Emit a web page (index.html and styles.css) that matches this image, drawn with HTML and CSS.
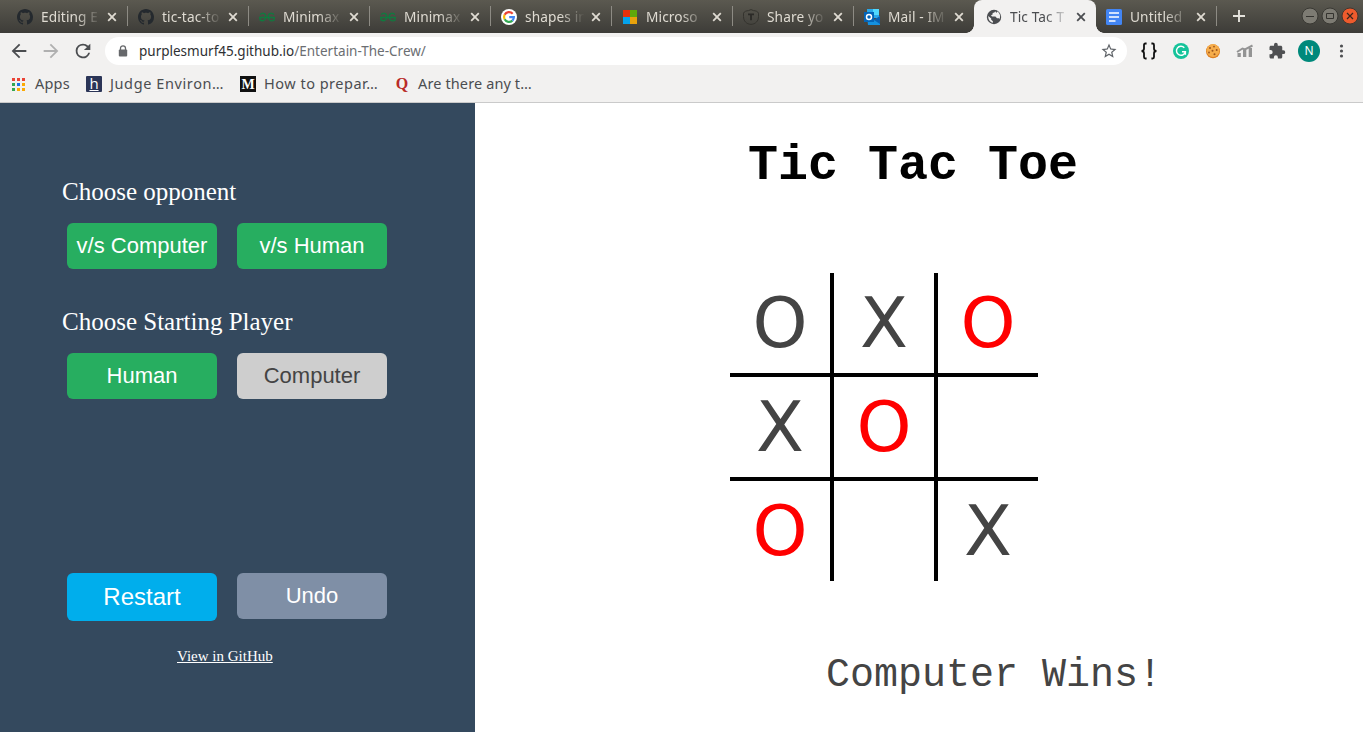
FILE: index.html
```html
<!DOCTYPE html>
<html lang="en">
<head>
<meta charset="utf-8">
<title>Tic Tac Toe</title>
<link rel="stylesheet" href="styles.css">
</head>
<body>
<svg class="defs" width="0" height="0">
  <symbol id="octocat" viewBox="0 0 16 16"><path d="M8 0C3.58 0 0 3.58 0 8c0 3.54 2.29 6.53 5.47 7.59.4.07.55-.17.55-.38 0-.19-.01-.82-.01-1.49-2.01.37-2.53-.49-2.69-.94-.09-.23-.48-.94-.82-1.13-.28-.15-.68-.52-.01-.53.63-.01 1.08.58 1.23.82.72 1.21 1.87.87 2.33.66.07-.52.28-.87.51-1.07-1.78-.2-3.64-.89-3.64-3.95 0-.87.31-1.59.82-2.15-.08-.2-.36-1.02.08-2.12 0 0 .67-.21 2.2.82.64-.18 1.32-.27 2-.27s1.36.09 2 .27c1.53-1.04 2.2-.82 2.2-.82.44 1.1.16 1.92.08 2.12.51.56.82 1.27.82 2.15 0 3.07-1.87 3.75-3.65 3.95.29.25.54.73.54 1.48 0 1.07-.01 1.93-.01 2.2 0 .21.15.46.55.38A8.01 8.01 0 0 0 16 8c0-4.42-3.58-8-8-8z" fill="#24292e"/></symbol>
  <symbol id="geeks" viewBox="0 0 16 16"><path d="M0 8.500h16M1.200 5.600C2.800 3.600 6.800 3.900 6.800 7.800S3.500 12.600 1 10.900V8.500M14.800 5.600C13.200 3.600 9.200 3.900 9.200 7.800S12.500 12.600 15 11.200V8.500" fill="none" stroke="#0f7a3f" stroke-width="1.300"/></symbol>
  <symbol id="cross" viewBox="0 0 10 10"><path d="M1.200 1.200l7.600 7.600M8.800 1.200L1.200 8.800" stroke="currentColor" stroke-width="1.800"/></symbol>
</svg>

<header class="browser">
  <div class="tabs">
    <div class="tab"><svg class="fav"><use href="#octocat"/></svg><span class="name">Editing E</span><svg class="close"><use href="#cross"/></svg></div>
    <div class="tab"><svg class="fav"><use href="#octocat"/></svg><span class="name">tic-tac-to</span><svg class="close"><use href="#cross"/></svg></div>
    <div class="tab"><svg class="fav"><use href="#geeks"/></svg><span class="name">Minimax</span><svg class="close"><use href="#cross"/></svg></div>
    <div class="tab"><svg class="fav"><use href="#geeks"/></svg><span class="name">Minimax</span><svg class="close"><use href="#cross"/></svg></div>
    <div class="tab"><svg class="fav" viewBox="0 0 16 16"><circle cx="8" cy="8" r="8" fill="#fff"/><g fill="none" stroke-width="2.200"><path d="M11.700 4.700A5 5 0 0 0 3.600 5.800" stroke="#ea4335"/><path d="M3.600 5.800a5 5 0 0 0 0 4.500" stroke="#fbbc05"/><path d="M3.600 10.300a5 5 0 0 0 7.800 1.300" stroke="#34a853"/><path d="M11.400 11.600a5 5 0 0 0 1.500-3.500H8.200" stroke="#4285f4"/></g></svg><span class="name">shapes in</span><svg class="close"><use href="#cross"/></svg></div>
    <div class="tab"><svg class="fav" viewBox="0 0 16 16"><path d="M1 1h7v7H1z" fill="#e8300c"/><path d="M8 1h7v7H8z" fill="#5fa80b"/><path d="M1 8h7v7H1z" fill="#05a3ed"/><path d="M8 8h7v7H8z" fill="#e8a20c"/></svg><span class="name">Microso</span><svg class="close"><use href="#cross"/></svg></div>
    <div class="tab"><svg class="fav" viewBox="0 0 16 16"><path d="M8 .6l2.500 1c2 .3 4 .4 5 2.600v3.400c0 4.500-3 7.500-7.500 7.800C3.500 15.100.5 12.100.5 7.600V4.200c1-2.200 3-2.300 5-2.600z" fill="none" stroke="#34332e"/><path d="M5 5.300h6M8 5.300v6" stroke="#2b2a27" stroke-width="1.800"/></svg><span class="name">Share yo</span><svg class="close"><use href="#cross"/></svg></div>
    <div class="tab last"><svg class="fav" viewBox="0 0 16 16"><path d="M3 0h12v9H3z" fill="#28a8ea"/><path d="M9 0h6v6H9z" fill="#50d9ff"/><path d="M3 7l7 4 6-4v9H4z" fill="#1490df"/><path d="M10 11l6-4v8z" fill="#0a5fb0"/><path d="M0 3h10v10H0z" fill="#0364b8"/><circle cx="5" cy="8" r="2.500" fill="none" stroke="#fff" stroke-width="1.500"/></svg><span class="name">Mail - IM</span><svg class="close"><use href="#cross"/></svg></div>
    <div class="tab active"><svg class="fav" viewBox="0 0 16 16"><circle cx="8" cy="8" r="7.200" fill="#4b4d50"/><path d="M2.300 7l2.900 2.600v1.200l1.700 1.400v1.600C4 13.300 2 10.500 2.300 7zM9.200 2.200l-.8 1.400-1.800.5v1.500l-1.600.6 1 1.300h3.400l1.600 1.800h1.500c.7 0 1.100.6.800 1.300 1.800-3.300.5-6.900-2.200-8l-.7 1.300z" fill="#f2f1f0"/></svg><span class="name">Tic Tac T</span><svg class="close"><use href="#cross"/></svg></div>
    <div class="tab"><svg class="fav" viewBox="0 0 16 16"><rect width="16" height="16" rx="1.500" fill="#4285f4"/><path d="M3 4h10M3 8h10M3 12h6.500" stroke="#fff" stroke-width="1.700"/></svg><span class="name">Untitled</span><svg class="close"><use href="#cross"/></svg></div>
    <svg class="newtab" viewBox="0 0 12 12"><path d="M6 0v12M0 6h12" stroke="#e4e2dc" stroke-width="1.900"/></svg>
    <div class="window">
      <svg viewBox="0 0 18 18"><circle cx="9" cy="9" r="8" fill="#7d7b73" stroke="#393833"/><path d="M5 9.500h8" stroke="#34332f"/></svg>
      <svg viewBox="0 0 18 18"><circle cx="9" cy="9" r="8" fill="#7d7b73" stroke="#393833"/><path d="M5.500 6.500h7v5h-7z" fill="none" stroke="#34332f"/></svg>
      <svg viewBox="0 0 18 18"><circle cx="9" cy="9" r="8" fill="#ee5b2d" stroke="#43362e"/><path d="M6 6l6 6M12 6l-6 6" stroke="#3a251c" stroke-width="1.200"/></svg>
    </div>
  </div>

  <div class="toolbar">
    <svg class="nav" viewBox="0 0 24 24"><path d="M20 11H7.830l5.590-5.590L12 4l-8 8 8 8 1.410-1.410L7.830 13H20z"/></svg>
    <svg class="nav off" viewBox="0 0 24 24"><path d="M12 4l-1.410 1.410L16.170 11H4v2h12.170l-5.580 5.590L12 20l8-8z"/></svg>
    <svg class="nav" viewBox="0 0 24 24"><path d="M17.650 6.350A7.960 7.960 0 0 0 12 4a8 8 0 1 0 7.730 10h-2.080A6 6 0 1 1 12 6c1.660 0 3.140.69 4.220 1.780L13 11h7V4z"/></svg>
    <div class="address">
      <svg class="lock" viewBox="0 0 10 12"><path d="M2.500 5V3.300a2.500 2.500 0 0 1 5 0V5" fill="none" stroke="#66686b" stroke-width="1.300"/><rect x=".8" y="4.600" width="8.400" height="7" rx="1" fill="#66686b"/></svg>
      <span class="url"><b>purplesmurf45.github.io</b>/Entertain-The-Crew/</span>
      <svg class="star" viewBox="0 0 24 24"><path d="M22 9.240l-7.190-.62L12 2 9.190 8.630 2 9.240l5.460 4.730L5.820 21 12 17.270 18.180 21l-1.630-7.030zM12 15.400l-3.760 2.270 1-4.280-3.320-2.880 4.380-.38L12 6.100l1.710 4.040 4.380.38-3.320 2.880 1 4.280z" fill="#5f6368"/></svg>
    </div>
    <div class="extensions">
      <svg viewBox="0 0 18 18"><path d="M6.600 1.500H5.400Q4 1.500 4 3v3.500Q4 9 1.500 9Q4 9 4 11.500V15q0 1.500 1.400 1.500h1.200M11.400 1.500h1.200Q14 1.500 14 3v3.500Q14 9 16.500 9Q14 9 14 11.500V15q0 1.500-1.400 1.500h-1.200" fill="none" stroke="#111" stroke-width="1.800"/></svg>
      <svg viewBox="0 0 18 18"><circle cx="9" cy="9" r="8" fill="#15c39a"/><path d="M12.300 5.700a4.500 4.500 0 1 0 1.100 4H10M13.400 9.700v3" fill="none" stroke="#fff" stroke-width="1.400"/></svg>
      <svg viewBox="0 0 18 18"><circle cx="9" cy="9.200" r="7" fill="#dd7f22"/><circle cx="9" cy="8.500" r="6.500" fill="#f6ad4b"/><g fill="#9a531d"><circle cx="6" cy="6" r="1"/><circle cx="10" cy="4.600" r=".9"/><circle cx="12.700" cy="8" r="1"/><circle cx="8.500" cy="8.700" r="1"/><circle cx="5" cy="10.500" r=".9"/><circle cx="10.500" cy="12.300" r="1"/></g></svg>
      <svg viewBox="0 0 18 18"><path d="M1.500 11h3.300v4H1.500zM7 8h3.300v7H7zM12.700 6H16v9h-3.300z" fill="#949494"/><path d="M1 10l5.500-3.500 2.500 1L16.500 3.500" fill="none" stroke="#949494" stroke-width="2"/></svg>
      <svg viewBox="0 0 24 24"><path d="M20.500 11H19V7c0-1.100-.9-2-2-2h-4V3.500a2.500 2.500 0 0 0-5 0V5H4c-1.100 0-2 .9-2 2v3.800h1.500a2.700 2.700 0 0 1 0 5.400H2V20c0 1.100.9 2 2 2h3.800v-1.500a2.700 2.700 0 0 1 5.400 0V22H17c1.100 0 2-.9 2-2v-4h1.500a2.500 2.500 0 0 0 0-5z" fill="#4f5052"/></svg>
      <span class="avatar">N</span>
      <svg viewBox="0 0 18 18"><g fill="#4f5052"><circle cx="9.500" cy="4" r="1.600"/><circle cx="9.500" cy="9" r="1.600"/><circle cx="9.500" cy="14" r="1.600"/></g></svg>
    </div>
  </div>

  <div class="bookmarks">
    <svg class="apps" viewBox="0 0 13 13"><path d="M0 0h3v3H0zM5 0h3v3H5zM10 0h3v3h-3z" fill="#ea4335"/><path d="M0 5h3v3H0zM0 10h3v3H0z" fill="#34a853"/><path d="M5 5h3v3H5z" fill="#1a73e8"/><path d="M10 5h3v3h-3zM5 10h3v3H5zM10 10h3v3h-3z" fill="#fbaa05"/></svg>
    <span class="mark apps-label">Apps</span>
    <span class="badge judge">h</span>
    <span class="mark judge-label">Judge Environ…</span>
    <span class="badge medium">M</span>
    <span class="mark medium-label">How to prepar…</span>
    <span class="badge quora">Q</span>
    <span class="mark quora-label">Are there any t…</span>
  </div>
</header>

<main class="page">
  <aside class="sidebar">
    <h2>Choose opponent</h2>
    <div class="row"><button>v/s Computer</button><button>v/s Human</button></div>
    <h2>Choose Starting Player</h2>
    <div class="row"><button>Human</button><button class="idle">Computer</button></div>
    <div class="row actions"><button class="restart">Restart</button><button class="undo">Undo</button></div>
    <a class="source" href="#">View in GitHub</a>
  </aside>
  <section class="game">
    <h1>Tic Tac Toe</h1>
    <div class="board">
      <div>O</div><div>X</div><div class="win">O</div>
      <div>X</div><div class="win">O</div><div></div>
      <div class="win">O</div><div></div><div>X</div>
    </div>
    <p class="status">Computer Wins!</p>
  </section>
</main>
</body>
</html>
```
FILE: styles.css
```css
* { box-sizing: border-box; }
body { margin: 0; height: 732px; overflow: hidden; background: #fff; }
svg { display: block; flex: none; }
.defs { position: absolute; }

.browser { height: 103px; background: #f2f1f0; border-bottom: 1px solid #cacaca; font-family: "Noto Sans", sans-serif; }
.tabs { display: flex; height: 33px; padding-left: 7px; background: linear-gradient(#5b5950, #3d3c38); }
.tab { display: flex; align-items: center; flex: none; width: 121px; padding-left: 10px; color: #dfdbd2; background: linear-gradient(#8d8b84, #8d8b84) 100% 6px / 1px 20px no-repeat; }
.tab.last { width: 120px; background: none; }
.tab.active { width: 122px; border-radius: 8px 8px 0 0; color: #4b4d50; background: #f2f1f0; position: relative; padding-left: 12px; }
.tab.active::before, .tab.active::after { content: ""; position: absolute; bottom: 0; width: 8px; height: 8px; }
.tab.active::before { left: -8px; background: radial-gradient(circle at 0 0, transparent 7.5px, #f2f1f0 8px); }
.tab.active::after { right: -8px; background: radial-gradient(circle at 100% 0, transparent 7.5px, #f2f1f0 8px); }
.fav { width: 16px; height: 16px; }
.name { flex: none; width: 64px; margin-left: 8px; white-space: nowrap; font-size: 13.7px; letter-spacing: .1px; line-height: 20px; -webkit-mask-image: linear-gradient(90deg, #000 55%, transparent 93%); mask-image: linear-gradient(90deg, #000 55%, transparent 93%); }
.close { width: 10px; height: 10px; margin-left: 2px; }
.newtab { width: 12px; height: 12px; margin: 10px 0 0 16px; }
.window { display: flex; gap: 2px; margin: 7px 4px 0 auto; }
.window svg { width: 18px; height: 18px; }

.toolbar { display: flex; align-items: center; height: 36px; padding-left: 8px; }
.nav { width: 22px; height: 22px; margin-right: 10px; fill: #4b4d50; }
.nav.off { fill: #b0b0b0; }
.address { display: flex; align-items: center; width: 1022px; height: 28px; margin-left: 1px; padding: 0 9px 0 13px; border-radius: 14px; background: #fff; }
.lock { width: 10px; height: 12px; }
.url { margin-left: 11px; font-size: 13.5px; line-height: 20px; color: #6b6e72; white-space: nowrap; }
.url b { font-weight: 400; color: #2e3033; }
.star { width: 18px; height: 18px; margin-left: auto; }
.extensions { display: flex; align-items: center; gap: 14px; margin-left: 13px; }
.extensions svg { width: 18px; height: 18px; }
.avatar { width: 22px; height: 22px; margin: 0 -2px; border-radius: 50%; background: #00897b; color: #fff; font-size: 12px; line-height: 22px; text-align: center; }

.bookmarks { display: flex; align-items: center; height: 30px; padding-left: 12px; }
.apps { width: 13px; height: 13px; }
.mark { flex: none; margin-top: -2px; font-size: 14.5px; line-height: 20px; color: #4b4d50; white-space: nowrap; }
.apps-label { width: 51px; margin-left: 10px; letter-spacing: .2px; }
.judge-label { width: 130px; margin-left: 8px; letter-spacing: .6px; }
.medium-label { width: 130px; margin-left: 8px; letter-spacing: .5px; }
.quora-label { margin-left: 8px; letter-spacing: .12px; }
.badge { flex: none; width: 16px; height: 16px; text-align: center; color: #fff; font: 700 14px/18px "Liberation Serif", serif; }
.judge { border-radius: 1px; background: #2b3557; font: 15px/14px "Open Sans", sans-serif; text-decoration: underline; }
.medium { background: #111; }
.quora { color: #b92b27; font-size: 16px; line-height: 15px; }

.page { display: flex; height: 629px; }
.sidebar { width: 475px; padding: 74px 0 0 62px; background: #34495e; }
.sidebar h2 { height: 30px; margin: 0 0 16px; font: 25px/30px "Liberation Serif", serif; color: #fff; }
.row { display: flex; align-items: flex-start; gap: 20px; height: 84px; padding-left: 5px; }
.row button { width: 150px; height: 46px; padding: 0 0 1px; border: 0; border-radius: 6px; background: #27ae60; color: #fff; font: 22px/25px "Liberation Sans", sans-serif; }
.row .idle { background: #cecece; color: #444; }
.actions { margin-top: 136px; height: 74px; }
.row .restart { height: 48px; padding: 0; background: #00aeec; font-size: 24px; line-height: 28px; }
.row .undo { background: #7f8fa6; }
.source { display: inline-block; margin-left: 115px; font: 15px/18px "Liberation Serif", serif; color: #fff; }

.game { flex: 1; }
.game h1 { height: 57px; margin: 34px 0 79px 273px; font: 700 50px/57px "Liberation Mono", monospace; color: #000; }
.board { display: grid; grid-template: repeat(3, 100px) / repeat(3, 100px); gap: 4px; width: 308px; margin-left: 255px; background: #000; }
.board div { background: #fff; color: #444; text-align: center; font: 70px/100px "DejaVu Sans", sans-serif; }
.board .win { color: #f00; }
.status { margin: 72px 0 0 351px; font: 40px/45px "Liberation Mono", monospace; color: #444; }
```
